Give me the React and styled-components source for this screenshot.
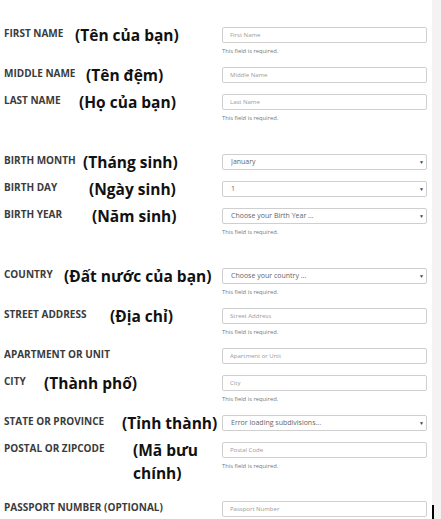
import React from 'react';
import styled, { createGlobalStyle } from 'styled-components';

const Global = createGlobalStyle`
  html, body { margin: 0; padding: 0; background: #fff; }
  body { font-family: "Open Sans", "Noto Sans", sans-serif; }
  * { box-sizing: border-box; }
`;

const Page = styled.div`
  display: flex;
  width: 441px;
  height: 519px;
  overflow: hidden;
`;

const Form = styled.form`
  flex: 0 0 432px;
  padding: 27px 0 0 4px;
  display: flex;
  flex-direction: column;
`;

const Strip = styled.div`
  flex: 1;
  background: #f3f3f3;
  display: flex;
  flex-direction: column;
  justify-content: flex-end;
`;

const Caret = styled.div`
  width: 2px;
  height: 14px;
  background: #000;
`;

const Row = styled.div`
  display: grid;
  grid-template-columns: 218px 205px;
  align-items: start;
  margin-bottom: ${(p) => p.$after}px;
`;

const LabelCell = styled.div`
  display: flex;
  align-items: flex-start;
  height: 16px;
`;

const Label = styled.label`
  flex: 0 0 ${(p) => p.$slot}px;
  font-size: 10px;
  line-height: 12px;
  font-weight: 700;
  color: #3b3b3b;
  text-transform: uppercase;
  white-space: nowrap;
`;

const Note = styled.span`
  font-size: 15.5px;
  line-height: 23px;
  margin-top: -3px;
  font-weight: 700;
  color: #111;
  white-space: ${(p) => (p.$wrap ? 'normal' : 'nowrap')};
  width: ${(p) => (p.$wrap ? '80px' : 'auto')};
`;

const FieldCell = styled.div`
  display: flex;
  flex-direction: column;
`;

const TextInput = styled.input`
  display: block;
  width: 100%;
  height: 16px;
  margin: 0;
  border: 1px solid #cfcfcf;
  border-radius: 2px;
  padding: 0 7px;
  font-family: "Open Sans", sans-serif;
  font-size: 6px;
  color: #555;
  background: #fff;
  outline: none;
  &::placeholder { color: #9a9a9a; }
`;

const SelectWrap = styled.div`
  position: relative;
  width: 100%;
  height: 16px;
`;

const Select = styled.select`
  display: block;
  appearance: none;
  -webkit-appearance: none;
  width: 100%;
  height: 16px;
  margin: 0;
  border: 1px solid #cfcfcf;
  border-radius: 2px;
  padding: 0 0 0 8px;
  font-family: "Open Sans", sans-serif;
  font-size: 7px;
  line-height: 14px;
  color: #666;
  background: #fff;
  outline: none;
`;

const Arrow = styled.span`
  position: absolute;
  right: 3px;
  top: 4px;
  font-size: 5px;
  line-height: 8px;
  color: #444;
  pointer-events: none;
`;

const Help = styled.div`
  margin-top: 3px;
  font-size: 5.8px;
  line-height: 10px;
  color: #777;
`;

const fields = [
  { label: 'First Name', note: '(Tên của bạn)', x: 75, ph: 'First Name', help: true },
  { label: 'Middle Name', note: '(Tên đệm)', x: 86, ph: 'Middle Name' },
  { label: 'Last Name', note: '(Họ của bạn)', x: 79, ph: 'Last Name', help: true, gap: 20 },
  { label: 'Birth Month', note: '(Tháng sinh)', x: 83, select: 'January' },
  { label: 'Birth Day', note: '(Ngày sinh)', x: 89, select: '1' },
  { label: 'Birth Year', note: '(Năm sinh)', x: 92, select: 'Choose your Birth Year ...', help: true, gap: 20 },
  { label: 'Country', note: '(Đất nước của bạn)', x: 64, select: 'Choose your country ...', help: true },
  { label: 'Street Address', note: '(Địa chỉ)', x: 110, ph: 'Street Address', help: true },
  { label: 'Apartment or Unit', ph: 'Apartment or Unit' },
  { label: 'City', note: '(Thành phố)', x: 44, ph: 'City', help: true },
  { label: 'State or Province', note: '(Tỉnh thành)', x: 122, select: 'Error loading subdivisions...' },
  { label: 'Postal or Zipcode', note: '(Mã bưu chính)', x: 133, ph: 'Postal Code', help: true, gap: 19, wrap: true },
  { label: 'Passport Number (Optional)', ph: 'Passport Number' },
];

export default function App() {
  return (
    <Page>
      <Global />
      <Form onSubmit={(e) => e.preventDefault()}>
        {fields.map((f) => (
          <Row key={f.label} $after={11 + (f.gap || 0)}>
            <LabelCell>
              <Label $slot={f.x ? f.x - 4 : 218}>{f.label}</Label>
              {f.note && <Note $wrap={f.wrap}>{f.note}</Note>}
            </LabelCell>
            <FieldCell>
              {f.select ? (
                <SelectWrap>
                  <Select defaultValue={f.select}>
                    <option>{f.select}</option>
                  </Select>
                  <Arrow>▼</Arrow>
                </SelectWrap>
              ) : (
                <TextInput placeholder={f.ph} />
              )}
              {f.help && <Help>This field is required.</Help>}
            </FieldCell>
          </Row>
        ))}
      </Form>
      <Strip>
        <Caret />
      </Strip>
    </Page>
  );
}
